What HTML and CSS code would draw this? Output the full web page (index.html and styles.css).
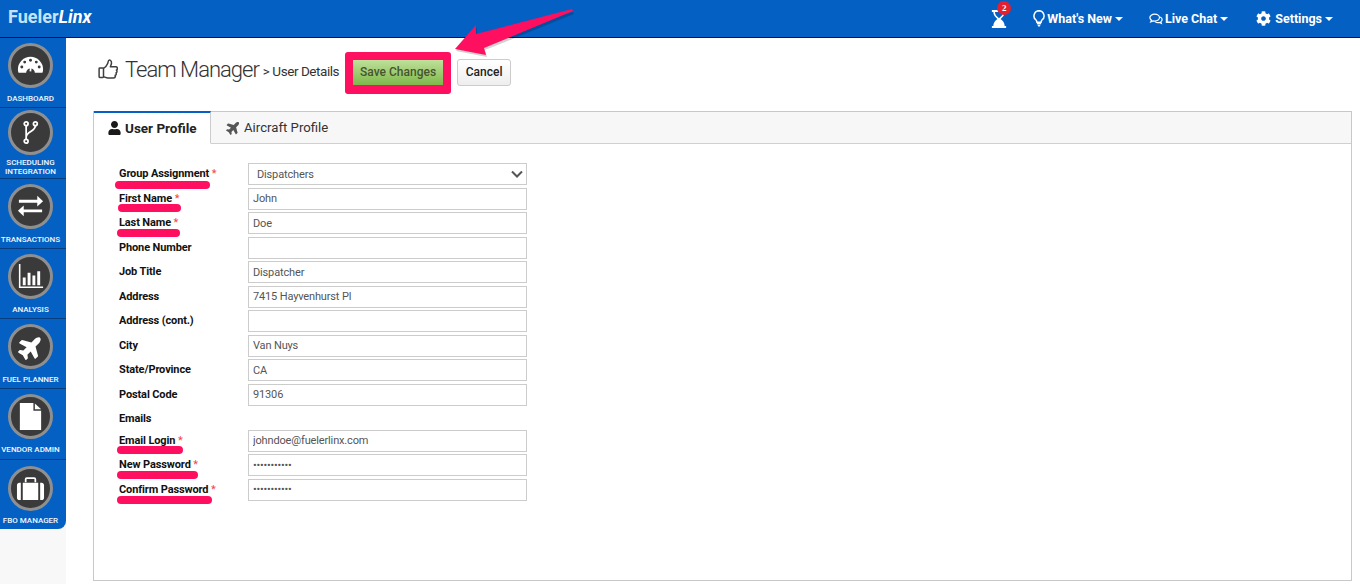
FILE: index.html
```html
<!DOCTYPE html>
<html lang="en">
<head>
<meta charset="utf-8">
<title>FuelerLinx - Team Manager</title>
<link rel="stylesheet" href="styles.css">
</head>
<body>
<header class="topbar">
  <div class="logo">Fueler<em>Linx</em></div>
  <nav class="topnav">
    <span class="timer">
      <svg class="timer-icon" viewBox="0 0 18 20"><path fill="#fff" d="M1 0h16v2.200h-1.600c0 3.600-2.400 6-4.600 7.800 2.200 1.800 4.600 4.200 4.600 7.800H17V20H1v-2.200h1.600c0-3.600 2.400-6 4.600-7.800C5 8.200 2.600 5.800 2.600 2.200H1z"/><path fill="#0560c4" d="M4.400 2.200h9.200c0 2.800-2 5-4.600 7-2.600-2-4.600-4.200-4.600-7z"/></svg>
      <span class="badge">2</span>
    </span>
    <a class="navlink nl-new">
      <svg class="bulb" viewBox="0 0 12 17"><path fill="none" stroke="#fff" stroke-width="1.500" d="M6 .8a5.100 5.100 0 0 0-3.200 9c.7.700 1 1.500 1.100 2.400h4.200c.1-.9.400-1.700 1.100-2.400A5.100 5.100 0 0 0 6 .8z"/><path fill="#fff" d="M3.900 13h4.200v1.300H3.900zM4.400 14.800h3.200L6.800 16.400H5.200z"/></svg>
      What's New<i class="caret"></i>
    </a>
    <a class="navlink nl-chat">
      <svg class="chat" viewBox="0 0 16 13"><path fill="none" stroke="#fff" stroke-width="1.400" d="M6.500 1C3.400 1 1 2.700 1 4.900c0 1.200.7 2.200 1.800 3L2 9.800l2.600-1.200c.6.100 1.200.2 1.900.2 3.100 0 5.500-1.700 5.500-3.900S9.600 1 6.500 1z"/><path fill="none" stroke="#fff" stroke-width="1.400" d="M12.600 4.200c1.500.6 2.400 1.700 2.400 3 0 1-.6 1.900-1.500 2.600l.6 1.700-2.200-1c-1.600.3-3.700.1-4.900-1"/></svg>
      Live Chat<i class="caret"></i>
    </a>
    <a class="navlink nl-set">
      <svg class="gear" viewBox="0 0 512 512"><path fill="#fff" d="M487.400 315.700l-42.600-24.600c4.300-23.200 4.300-47 0-70.200l42.600-24.600c4.900-2.800 7.100-8.600 5.500-14-11.100-35.600-30-67.800-54.700-94.600-3.800-4.100-10-5.100-14.800-2.300L380.800 110c-17.900-15.400-38.500-27.300-60.800-35.100V25.800c0-5.600-3.900-10.500-9.400-11.700-36.700-8.200-74.300-7.800-109.200 0-5.500 1.200-9.400 6.100-9.400 11.700V75c-22.200 7.900-42.800 19.800-60.800 35.100L88.700 85.500c-4.900-2.800-11-1.900-14.800 2.300-24.700 26.700-43.600 58.900-54.700 94.600-1.700 5.400.6 11.200 5.500 14L67.300 221c-4.300 23.200-4.300 47 0 70.200l-42.600 24.600c-4.900 2.800-7.100 8.600-5.500 14 11.100 35.600 30 67.800 54.700 94.600 3.800 4.100 10 5.100 14.800 2.300l42.600-24.600c17.900 15.400 38.500 27.300 60.800 35.100v49.200c0 5.600 3.900 10.500 9.400 11.700 36.700 8.200 74.300 7.800 109.200 0 5.500-1.200 9.400-6.100 9.400-11.700v-49.200c22.200-7.900 42.800-19.800 60.800-35.100l42.600 24.600c4.900 2.800 11 1.900 14.800-2.300 24.700-26.700 43.600-58.900 54.700-94.600 1.500-5.500-.7-11.300-5.600-14.100zM256 336c-44.100 0-80-35.900-80-80s35.900-80 80-80 80 35.900 80 80-35.900 80-80 80z"/></svg>
      Settings<i class="caret"></i>
    </a>
  </nav>
</header>

<div class="shell">
  <aside class="sidebar">
    <a class="side-item">
      <span class="disc"><svg viewBox="0 0 30 30" class="ic"><path fill="#fff" fill-rule="evenodd" d="M2 19A13 13 0 0 1 28 19c0 1.500-.2 2.500-.7 3.500h-7.800a4.500 4.500 0 0 0-9 0H2.700C2.200 21.500 2 20.500 2 19z"/><g fill="#3a3a3a"><circle cx="15" cy="9.500" r="1.500"/><circle cx="9" cy="11.500" r="1.500"/><circle cx="21" cy="11.500" r="1.500"/><circle cx="6" cy="16.500" r="1.500"/><circle cx="24" cy="16.500" r="1.500"/></g><path fill="#fff" d="M13.900 21l1.500-9 .9.100-.5 9z"/></svg></span>
      <span class="side-label">Dashboard</span>
    </a>
    <a class="side-item side-two">
      <span class="disc"><svg viewBox="0 0 30 30" class="ic"><g fill="none" stroke="#fff" stroke-width="1.800"><circle cx="10.500" cy="6" r="2"/><circle cx="20" cy="6" r="2"/><circle cx="10.500" cy="24" r="2"/><path d="M10.500 8v14M20 8c0 6-9.500 6-9.500 12"/></g></svg></span>
      <span class="side-label">Scheduling Integration</span>
    </a>
    <a class="side-item">
      <span class="disc"><svg viewBox="0 0 30 30" class="ic"><path fill="#fff" d="M3 7h19V3l6 5.500-6 5.500v-4H3zM27 17H8v-4l-6 5.500L8 24v-4h19z" transform="translate(0 1)"/></svg></span>
      <span class="side-label">Transactions</span>
    </a>
    <a class="side-item">
      <span class="disc"><svg viewBox="0 0 30 30" class="ic"><path fill="#fff" d="M3 2h1.600v23.400H28V27H3zM7 16h3v8H7zM12 11h3v13h-3zM17 14h3v10h-3zM22 9.500h3V24h-3z"/></svg></span>
      <span class="side-label">Analysis</span>
    </a>
    <a class="side-item">
      <span class="disc"><svg viewBox="0 0 576 512" class="ic ic-plane"><path fill="#fff" d="M480 192H365.710L260.610 8.060A16.014 16.014 0 0 0 246.710 0h-65.500c-10.630 0-18.300 10.170-15.380 20.390L214.860 192H112l-43.200-57.600c-3.020-4.030-7.770-6.400-12.800-6.400H16.010C5.600 128-2.040 137.780.49 147.880L32 256 .49 364.120C-2.040 374.220 5.600 384 16.010 384H56c5.040 0 9.780-2.370 12.800-6.400L112 320h102.860l-49.030 171.600c-2.920 10.220 4.750 20.400 15.380 20.400h65.500c5.740 0 11.040-3.080 13.890-8.060L365.710 320H480c35.350 0 96-28.650 96-64s-60.650-64-96-64z"/></svg></span>
      <span class="side-label">Fuel Planner</span>
    </a>
    <a class="side-item">
      <span class="disc"><svg viewBox="0 0 30 30" class="ic"><path fill="#fff" d="M4 1h14v8h8v20H4z"/><path fill="#fff" d="M19.500 1.500 26 7.500h-6.500z"/></svg></span>
      <span class="side-label">Vendor Admin</span>
    </a>
    <a class="side-item side-last">
      <span class="disc"><svg viewBox="0 0 30 30" class="ic"><path fill="#fff" d="M3.500 9C2.100 9 1 10 1 11.400v13.200C1 26 2.100 27 3.500 27H5V9zM7 9h16v18H7zM25 9v18h1.500c1.400 0 2.500-1 2.500-2.400V11.400C29 10 27.900 9 26.500 9z"/><path fill="none" stroke="#fff" stroke-width="1.800" d="M10 8.500v-3c0-.8.500-1.200 1.200-1.200h7.600c.7 0 1.200.4 1.200 1.200v3"/></svg></span>
      <span class="side-label">FBO Manager</span>
    </a>
  </aside>

  <main class="content">
    <div class="page-head">
      <svg class="thumb" viewBox="0 0 20 20"><path fill="none" stroke="#3f3f3f" stroke-width="1.500" stroke-linejoin="round" d="M5.500 9h-3.700c-.4 0-.7.300-.7.700v8c0 .4.300.7.700.7h3c.4 0 .7-.3.700-.7zM5.500 9.500c1.900-1.400 3.600-3.500 4.300-5.300.4-1 .2-3.100 1.600-3.100 1.700 0 2.300 1.800 2 3.600-.2 1.100-.7 2-1 3h5.200c1 0 1.800.9 1.800 1.800 0 .7-.4 1.300-1 1.600.4.300.6.800.6 1.300 0 .7-.4 1.200-1 1.500.2.300.3.600.3 1 0 .7-.5 1.200-1.100 1.400.1.200.2.500.2.800 0 1-.9 1.800-1.900 1.800H10c-1.800 0-3.100-.9-4.500-1.300"/></svg>
      <h1 class="page-title">Team Manager</h1>
      <span class="crumb">&gt; User Details</span>
      <div class="save-box"><button class="btn btn-save" type="button">Save Changes</button></div>
      <button class="btn btn-cancel" type="button">Cancel</button>
    </div>

    <section class="panel">
      <div class="tabs">
        <a class="tab tab-active">
          <svg class="tab-ic" viewBox="0 0 448 512"><path fill="#1a1a1a" d="M224 256c70.700 0 128-57.300 128-128S294.700 0 224 0 96 57.300 96 128s57.300 128 128 128zm89.600 32h-16.700c-22.200 10.200-46.900 16-72.900 16s-50.600-5.800-72.900-16h-16.700C60.200 288 0 348.200 0 422.400V464c0 26.500 21.500 48 48 48h352c26.500 0 48-21.500 48-48v-41.600c0-74.200-60.200-134.400-134.400-134.400z"/></svg>
          User Profile
        </a>
        <a class="tab">
          <svg class="tab-ic tab-plane" viewBox="0 0 576 512"><path fill="#555" d="M480 192H365.710L260.610 8.060A16.014 16.014 0 0 0 246.710 0h-65.500c-10.630 0-18.300 10.170-15.380 20.390L214.860 192H112l-43.200-57.600c-3.020-4.030-7.770-6.400-12.800-6.400H16.010C5.600 128-2.040 137.780.49 147.880L32 256 .49 364.120C-2.040 374.220 5.600 384 16.010 384H56c5.040 0 9.780-2.370 12.800-6.400L112 320h102.860l-49.030 171.600c-2.920 10.220 4.750 20.400 15.380 20.400h65.500c5.740 0 11.040-3.080 13.890-8.060L365.710 320H480c35.350 0 96-28.650 96-64s-60.650-64-96-64z"/></svg>
          Aircraft Profile
        </a>
      </div>
      <form class="form">
        <div class="row"><label class="lbl">Group Assignment <b class="req">*</b><span class="mark m-group"></span></label>
          <div class="select-wrap"><select class="field select"><option>Dispatchers</option></select>
            <svg class="chevron" viewBox="0 0 12 8"><path fill="none" stroke="#555" stroke-width="2" d="M1 1.500l5 5 5-5"/></svg></div></div>
        <div class="row"><label class="lbl">First Name <b class="req">*</b><span class="mark m-first"></span></label><input class="field" value="John"></div>
        <div class="row"><label class="lbl">Last Name <b class="req">*</b><span class="mark m-last"></span></label><input class="field" value="Doe"></div>
        <div class="row"><label class="lbl">Phone Number</label><input class="field" value=""></div>
        <div class="row"><label class="lbl">Job Title</label><input class="field" value="Dispatcher"></div>
        <div class="row"><label class="lbl">Address</label><input class="field" value="7415 Hayvenhurst Pl"></div>
        <div class="row"><label class="lbl">Address (cont.)</label><input class="field" value=""></div>
        <div class="row"><label class="lbl">City</label><input class="field" value="Van Nuys"></div>
        <div class="row"><label class="lbl">State/Province</label><input class="field" value="CA"></div>
        <div class="row"><label class="lbl">Postal Code</label><input class="field" value="91306"></div>
        <div class="row row-head"><label class="lbl">Emails</label></div>
        <div class="row"><label class="lbl">Email Login <b class="req">*</b><span class="mark m-email"></span></label><input class="field" value="johndoe@fuelerlinx.com"></div>
        <div class="row"><label class="lbl">New Password <b class="req">*</b><span class="mark m-new"></span></label><input class="field field-pw" type="password" value="12345678901"></div>
        <div class="row"><label class="lbl">Confirm Password <b class="req">*</b><span class="mark m-confirm"></span></label><input class="field field-pw" type="password" value="12345678901"></div>
      </form>
    </section>
  </main>
</div>

<svg class="arrow" viewBox="0 0 130 60">
  <polygon class="arrow-shadow" points="2,43 23,19 23,27 119,4 120,6 31,42 33,49"/>
  <polygon class="arrow-main" points="1,41 22,17 22,26 118,1 119,3 30,40 32,47"/>
</svg>
</body>
</html>
```
FILE: styles.css
```css
* { box-sizing: border-box; }
html, body { margin: 0; padding: 0; height: 100%; }
body {
  font-family: Roboto, "Liberation Sans", sans-serif;
  background: #fff;
  color: #222;
  overflow: hidden;
  position: relative;
}
.topbar {
  height: 38px;
  background: #0560c4;
  border-bottom: 1px solid #0a1420;
  display: flex;
  align-items: center;
  justify-content: space-between;
  color: #fff;
}
.logo {
  padding-left: 8px;
  font-size: 18px;
  font-weight: 700;
  color: #c5e3f8;
  margin-top: -5px;
}
.logo em { font-weight: 700; font-style: italic; color: #fff; }
.topnav { display: flex; align-items: center; padding-right: 27px; }
.timer { position: relative; width: 18px; height: 20px; margin-right: 24px; margin-top: 1px; display: block; }
.timer-icon { display: block; width: 16px; height: 18px; margin-top: 1px; }
.badge {
  position: absolute;
  left: 6px;
  top: -8px;
  width: 14px;
  height: 14px;
  border-radius: 50%;
  background: #e2202e;
  color: #fff;
  font: 700 9px/14px "Liberation Serif", serif;
  text-align: center;
}
.navlink {
  display: flex;
  align-items: center;
  font-size: 12.500px;
  font-weight: 700;
  color: #fff;
}
.nl-new { margin-right: 26px; }
.nl-chat { margin-right: 28px; }
.bulb { width: 12px; height: 17px; margin-right: 2px; }
.chat { width: 14px; height: 12px; margin-right: 2px; }
.gear { width: 15px; height: 15px; margin-right: 4px; }
.caret {
  display: inline-block;
  margin-left: 3px;
  width: 0;
  height: 0;
  border-left: 4.500px solid transparent;
  border-right: 4.500px solid transparent;
  border-top: 4.500px solid #fff;
}
.shell { display: flex; height: 546px; background: linear-gradient(90deg, #f8f8f8 66px, #fff 66px); }
.sidebar {
  width: 66px;
  height: 491px;
  background: #0560c4;
  border-bottom-right-radius: 8px;
  flex: none;
  display: flex;
  flex-direction: column;
}
.side-item {
  height: 70.300px;
  flex: none;
  border-bottom: 1px solid #063d7f;
  display: flex;
  flex-direction: column;
  align-items: center;
  padding: 5px 5px 0 0;
}
.side-two { padding-top: 2px; }
.side-two .side-label { margin-top: 3px; }
.side-last { border-bottom: 0; padding-top: 6px; }
.side-last .side-label { margin-top: 5px; }
.disc {
  width: 45px;
  height: 45px;
  flex: none;
  border-radius: 50%;
  background: #3a3a3a;
  border: 3px solid #8f8f8f;
  display: flex;
  align-items: center;
  justify-content: center;
}
.ic { width: 29px; height: 29px; }
.ic-plane { width: 26px; height: 26px; transform: rotate(-45deg); }
.side-label {
  margin-top: 6px;
  width: 66px;
  margin-right: -5px;
  font-size: 8px;
  line-height: 9px;
  font-weight: 500;
  color: #f2f7fc;
  text-transform: uppercase;
  text-align: center;
  transform: translateX(-2.500px);
  white-space: normal;
}
.content { flex: 1; padding: 0 8px 0 27px; min-width: 0; }
.page-head { height: 73px; display: flex; align-items: center; padding: 0 0 3px 5px; }
.thumb { width: 20px; height: 20px; margin-right: 7px; margin-top: -9px; flex: none; }
.page-title { margin: -7px 0 0; font-size: 22px; font-weight: 300; color: #333; letter-spacing: -1px; white-space: nowrap; }
.crumb { margin: -5px 0 0 4px; font-size: 13.500px; letter-spacing: -.45px; color: #333; white-space: nowrap; font-weight: 400; }
.save-box {
  margin-left: 6px;
  background: #ff0f5f;
  border-radius: 3px;
  padding: 8px;
  width: 106px;
  height: 42px;
  display: flex;
  flex: none;
}
.btn {
  font-family: Roboto, "Liberation Sans", sans-serif;
  font-size: 12px;
  padding: 0;
  cursor: pointer;
}
.btn-save {
  width: 90px;
  height: 25px;
  border: 0;
  padding-bottom: 2px;
  color: #46552f;
  font-weight: 500;
  background: linear-gradient(#bfe09a, #7eb84a);
}
.btn-cancel {
  margin: -2px 0 0 6px;
  width: 54px;
  height: 27px;
  border: 1px solid #ccc;
  border-radius: 3px;
  background: linear-gradient(#fff, #eee);
  color: #222;
  font-weight: 500;
  flex: none;
}
.panel {
  width: 1259px;
  height: 470px;
  border: 1px solid #c8c8c8;
  display: flex;
  flex-direction: column;
}
.tabs { height: 32px; flex: none; background: #f7f7f7; border-bottom: 1px solid #d0d0d0; display: flex; }
.tab {
  display: flex;
  align-items: center;
  padding: 0 15px 1px;
  font-size: 13.200px;
  color: #333;
  height: 32px;
  white-space: nowrap;
}
.tab-active {
  width: 117px;
  margin-top: -1px;
  height: 33px;
  padding-left: 14px;
  font-size: 13.500px;
  background: #fff;
  border-top: 2px solid #0560c4;
  border-right: 1px solid #ccc;
  border-bottom: 1px solid #fff;
  font-weight: 700;
  color: #222;
}
.tab-ic { width: 13px; height: 14px; margin-right: 4px; flex: none; }
.tab-plane { width: 15px; height: 15px; margin-right: 3px; transform: rotate(-45deg); }
.form { padding: 19px 0 0 25px; display: flex; flex-direction: column; gap: 2.500px; }
.row { display: flex; align-items: center; height: 22px; }
.row-head { height: 19px; }
.row-head .lbl { margin-top: 2px; }
.lbl {
  width: 129px;
  flex: none;
  position: relative;
  font-size: 11px;
  font-weight: 700;
  letter-spacing: -.12px;
  color: #111;
  margin-top: -1px;
  line-height: 13px;
}
.req { color: #f4433f; font-weight: 400; }
.field {
  width: 279px;
  height: 22px;
  border: 1px solid #ccc;
  padding: 0 4px;
  font: 400 11px Roboto, "Liberation Sans", sans-serif;
  color: #555;
  background: #fff;
  border-radius: 0;
  letter-spacing: -.15px;
  outline: 0;
}
.field-pw { letter-spacing: -.2px; }
.select-wrap { position: relative; width: 279px; height: 22px; }
.select { appearance: none; padding-left: 8px; display: block; }
.chevron { position: absolute; left: 263px; top: 7px; width: 12px; height: 8px; pointer-events: none; }
.mark { position: absolute; height: 8px; border-radius: 4px; background: #ff0f5f; top: 12.500px; }
.m-group { left: -4px; width: 95px; top: 13.500px; }
.m-first { left: -1px; width: 63px; }
.m-last { left: -2px; width: 63px; }
.m-email { left: -2px; width: 66px; }
.m-new { left: -2px; width: 81px; }
.m-confirm { left: -2px; width: 95px; top: 13.500px; }
.arrow { position: absolute; left: 454px; top: 8px; width: 130px; height: 60px; overflow: visible; }
.arrow-main { fill: #ff0f5f; }
.arrow-shadow { fill: #000; opacity: .18; }
```
